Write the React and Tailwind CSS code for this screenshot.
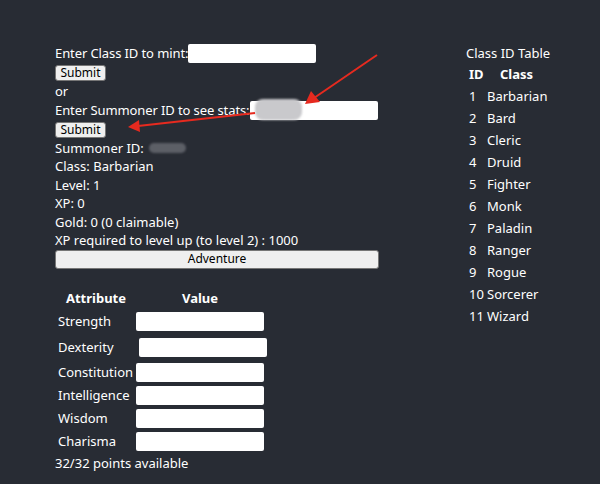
const classes = [
  "Barbarian",
  "Bard",
  "Cleric",
  "Druid",
  "Fighter",
  "Monk",
  "Paladin",
  "Ranger",
  "Rogue",
  "Sorcerer",
  "Wizard",
];

const attributes = [
  { name: "Strength", h: "h-[26px]", shift: "" },
  { name: "Dexterity", h: "h-[26px]", shift: "ml-[3px]" },
  { name: "Constitution", h: "h-[23px]", shift: "" },
  { name: "Intelligence", h: "h-[23px]", shift: "" },
  { name: "Wisdom", h: "h-[23px]", shift: "" },
  { name: "Charisma", h: "h-[23px]", shift: "" },
];

function SubmitButton() {
  return (
    <button className="block h-[16px] w-[51px] rounded-[3px] border border-[#767676] bg-[#efefef] text-[12px] leading-none text-black">
      Submit
    </button>
  );
}

function Field({ className = "" }) {
  return <input className={`h-[19px] w-[128px] flex-none rounded-[2px] bg-white outline-none ${className}`} />;
}

export default function App() {
  return (
    <div
      className="relative flex min-h-[484px] w-[600px] whitespace-nowrap bg-[#282c34] text-[13px] leading-[18.5px] text-white"
      style={{ fontFamily: '"Noto Sans", "Open Sans", sans-serif' }}
    >
      <div className="ml-[55px] mt-[44px] w-[325px] flex-none">
        <div className="flex items-center">
          <span className="tracking-[-0.1px]">Enter Class ID to mint:</span>
          <Field />
        </div>
        <div className="mt-[2px]">
          <SubmitButton />
        </div>
        <div className="mt-[1px]">or</div>
        <div className="flex items-center">
          <span className="tracking-[-0.1px]">Enter Summoner ID to see stats:</span>
          <div className="relative">
            <Field className="text-[12px] pl-[3px] text-black" />
            <div className="absolute left-[5px] top-[-2px] h-[21px] w-[47px] rounded-[8px] bg-[#c9c9cc] blur-[1px]" />
          </div>
        </div>
        <div className="mt-[2px]">
          <SubmitButton />
        </div>
        <div className="mt-[1px] flex items-center">
          <span>Summoner ID: </span>
          <span className="ml-[5px] h-[10px] w-[37px] rounded-[5px] bg-[#5c5f66] blur-[1px]" />
        </div>
        <div>Class: Barbarian</div>
        <div>Level: 1</div>
        <div>XP: 0</div>
        <div>Gold: 0 (0 claimable)</div>
        <div>XP required to level up (to level 2) : 1000</div>
        <button className="block h-[19px] w-[324px] rounded-[3px] border border-[#767676] bg-[#efefef] text-[12px] leading-none text-black">
          Adventure
        </button>

        <div className="mt-[20px] ml-[3px]">
          <div className="flex h-[20px] items-center font-bold">
            <span className="ml-[-2px] w-[80px] text-center">Attribute</span>
            <span className="w-[128px] text-center">Value</span>
          </div>
          {attributes.map((a) => (
            <div key={a.name} className={`flex items-center ${a.h}`}>
              <span className="w-[78px]">{a.name}</span>
              <Field className={a.shift} />
            </div>
          ))}
        </div>
        <div className="mt-[1px]">32/32 points available</div>
      </div>

      <div className="ml-[86px] mt-[44px]">
        <div className="h-[19px]">Class ID Table</div>
        <div className="ml-[3px] flex h-[22px] items-center font-bold">
          <span className="w-[31px]">ID</span>
          <span>Class</span>
        </div>
        {classes.map((c, i) => (
          <div key={c} className="ml-[3px] flex h-[22px] items-center">
            <span className="w-[18px]">{i + 1}</span>
            <span>{c}</span>
          </div>
        ))}
      </div>

      <svg className="pointer-events-none absolute left-0 top-0" width="600" height="484">
        <line x1="377" y1="55" x2="314" y2="98" stroke="#e62a1f" strokeWidth="2" />
        <polygon points="305,104 311,91 320,102" fill="#e62a1f" />
        <line x1="255" y1="113" x2="138" y2="126" stroke="#e62a1f" strokeWidth="2" />
        <polygon points="128,127 139,120 140,132" fill="#e62a1f" />
      </svg>
    </div>
  );
}
